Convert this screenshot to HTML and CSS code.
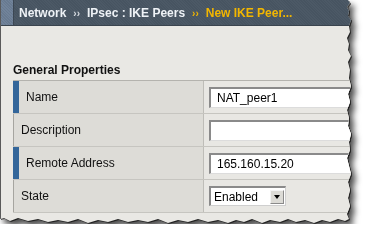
FILE: index.html
```html
<!DOCTYPE html>
<html>
<head>
    <meta charset="UTF-8">
    <meta name="viewport" content="width=device-width, initial-scale=1.0">
    <title>New IKE Peer</title>
    <link rel="stylesheet" href="styles.css">
</head>
<body>
    <div class="frame">
        <div class="sheet">
            <header class="crumbs">
                <div class="stripe"></div>
                <div class="trail">
                    <span>Network</span>
                    <span class="sep">››</span>
                    <span>IPsec : IKE Peers</span>
                    <span class="sep current">››</span>
                    <span class="current">New IKE Peer...</span>
                </div>
            </header>
            <main class="content">
                <h4 class="section-title">General Properties</h4>
                <div class="props">
                    <div class="row">
                        <div class="label req">Name</div>
                        <div class="value"><div class="field">NAT_peer1</div></div>
                    </div>
                    <div class="row">
                        <div class="label">Description</div>
                        <div class="value"><div class="field"></div></div>
                    </div>
                    <div class="row">
                        <div class="label req">Remote Address</div>
                        <div class="value"><div class="field">165.160.15.20</div></div>
                    </div>
                    <div class="row">
                        <div class="label">State</div>
                        <div class="value">
                            <div class="dropdown">
                                <span>Enabled</span>
                                <span class="drop-btn"><span class="arrow"></span></span>
                            </div>
                        </div>
                    </div>
                </div>
            </main>
        </div>
    </div>
</body>
</html>
```

FILE: styles.css
```css
body {
    margin: 0;
    padding: 0;
    background-color: #fff;
    font-family: 'Liberation Sans', Arial, sans-serif;
    font-size: 12px;
}

.frame {
    width: 356px;
    filter: drop-shadow(1px 1px 0 rgba(0, 0, 0, 0.6)) drop-shadow(4px 5px 3px rgba(0, 0, 0, 0.7));
}

.sheet {
    height: 224px;
    background-color: #e9e8e4;
    border-left: 1px solid #5a5a5a;
    overflow: hidden;
    clip-path: polygon(0 0, 348px 0, 350px 3px, 347px 7px, 349px 11px, 348px 16px, 351px 20px, 349px 26px,
        350px 32px, 347px 38px, 349px 44px, 348px 50px, 351px 56px, 348px 62px, 350px 70px, 349px 78px,
        351px 86px, 348px 94px, 350px 102px, 347px 110px, 349px 118px, 348px 126px, 351px 134px,
        349px 142px, 350px 150px, 347px 158px, 349px 166px, 351px 174px, 348px 182px, 350px 190px,
        348px 198px, 350px 206px, 347px 214px, 349px 219px, 345px 221px, 338px 219px, 330px 222px,
        322px 220px, 314px 223px, 305px 220px, 296px 222px, 288px 219px, 280px 222px, 270px 220px,
        262px 223px, 252px 219px, 244px 222px, 236px 220px, 228px 223px, 218px 220px, 208px 222px,
        198px 219px, 188px 222px, 178px 220px, 168px 223px, 158px 219px, 148px 222px, 138px 220px,
        128px 222px, 118px 219px, 108px 222px, 98px 220px, 88px 223px, 78px 219px, 68px 222px,
        58px 220px, 48px 222px, 38px 219px, 28px 221px, 18px 218px, 10px 221px, 4px 218px, 0 219px);
}

.crumbs {
    display: flex;
    height: 25px;
    border-bottom: 1px solid #3a444e;
    background: repeating-linear-gradient(45deg, #4c5966 0, #4c5966 1px, #475461 1px, #475461 2px);
}

.stripe {
    width: 12px;
    border-right: 1px solid #3c4753;
    background: repeating-linear-gradient(45deg, #71839a 0, #71839a 1px, #687a90 1px, #687a90 2px);
}

.trail {
    display: flex;
    align-items: center;
    padding-left: 5px;
    font-weight: bold;
    color: #eef2f6;
    white-space: nowrap;
}

.sep {
    margin: 2px 7px 0;
    font-size: 10px;
    color: #d8dde2;
}

.current {
    color: #f2b600;
}

.content {
    padding: 0 0 0 12px;
}

.section-title {
    margin: 37px 0 3px 0;
    font-size: 12px;
    line-height: 14px;
    color: #111;
}

.props {
    width: 345px;
    border-top: 1px solid #b4b3ae;
}

.row {
    display: grid;
    grid-template-columns: 191px 1fr;
    height: 33px;
    box-sizing: border-box;
    border-bottom: 1px solid #c6c5c0;
}

.label {
    display: flex;
    align-items: center;
    padding-left: 7px;
    background-color: #dddcd7;
    border-left: 1px solid #a6a5a0;
    border-right: 1px solid #bebdb8;
    color: #111;
}

.label.req {
    border-left: 6px solid #33669a;
    padding-left: 7px;
}

.value {
    display: flex;
    align-items: center;
    padding-left: 5px;
    background-color: #e8e7e3;
}

.field {
    width: 200px;
    height: 21px;
    box-sizing: border-box;
    background-color: #fff;
    border-top: 2px solid #8a8a8a;
    border-left: 2px solid #8a8a8a;
    border-bottom: 1px solid #dcdcdc;
    border-right: 1px solid #dcdcdc;
    padding-left: 6px;
    line-height: 18px;
    color: #000;
}

.dropdown {
    display: flex;
    align-items: center;
    justify-content: space-between;
    width: 77px;
    height: 20px;
    box-sizing: border-box;
    background-color: #fff;
    border-top: 2px solid #8a8a8a;
    border-left: 2px solid #8a8a8a;
    border-bottom: 1px solid #cfcfcf;
    border-right: 1px solid #cfcfcf;
    padding: 0 1px 0 3px;
    color: #000;
}

.drop-btn {
    display: flex;
    align-items: center;
    justify-content: center;
    width: 14px;
    height: 14px;
    box-sizing: border-box;
    background-color: #dcdbd6;
    border: 1px solid #8a8a8a;
    border-top-color: #f4f4f4;
    border-left-color: #f4f4f4;
}

.arrow {
    width: 0;
    height: 0;
    border-left: 3px solid transparent;
    border-right: 3px solid transparent;
    border-top: 4px solid #000;
}
```
